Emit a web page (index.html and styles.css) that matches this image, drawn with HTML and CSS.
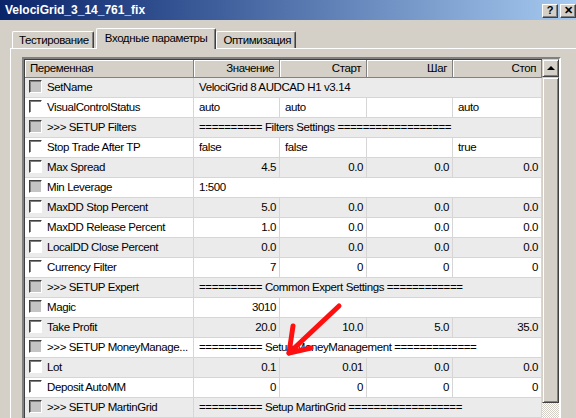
FILE: index.html
```html
<!DOCTYPE html>
<html lang="ru">
<head>
    <meta charset="UTF-8">
    <title>VelociGrid_3_14_761_fix</title>
    <link rel="stylesheet" href="styles.css">
</head>
<body>
<div class="window">
    <div class="titlebar">
        <span class="title">VelociGrid_3_14_761_fix</span>
        <div class="title-buttons">
            <span class="tbtn">?</span>
            <span class="tbtn">✕</span>
        </div>
    </div>

    <div class="tabs">
        <div class="tab tab-first">Тестирование</div>
        <div class="tab active">Входные параметры</div>
        <div class="tab">Оптимизация</div>
    </div>

    <div class="panel">
        <div class="grid-box">
            <table class="params">
                <colgroup>
                    <col class="c-name"><col class="c-val"><col class="c-start"><col class="c-step"><col class="c-stop">
                </colgroup>
                <thead>
                    <tr>
                        <th class="left">Переменная</th>
                        <th>Значение</th>
                        <th>Старт</th>
                        <th>Шаг</th>
                        <th>Стоп</th>
                    </tr>
                </thead>
                <tbody>
                    <tr class="odd">
                        <td><span class="cb off"></span>SetName</td>
                        <td colspan="4">VelociGrid 8 AUDCAD H1 v3.14</td>
                    </tr>
                    <tr>
                        <td><span class="cb"></span>VisualControlStatus</td>
                        <td>auto</td><td>auto</td><td></td><td>auto</td>
                    </tr>
                    <tr class="odd">
                        <td><span class="cb off"></span>&gt;&gt;&gt; SETUP Filters</td>
                        <td colspan="4">========== Filters Settings ==================</td>
                    </tr>
                    <tr>
                        <td><span class="cb"></span>Stop Trade After TP</td>
                        <td>false</td><td>false</td><td></td><td>true</td>
                    </tr>
                    <tr class="odd">
                        <td><span class="cb"></span>Max Spread</td>
                        <td class="num">4.5</td><td class="num">0.0</td><td class="num">0.0</td><td class="num">0.0</td>
                    </tr>
                    <tr>
                        <td><span class="cb off"></span>Min Leverage</td>
                        <td colspan="4">1:500</td>
                    </tr>
                    <tr class="odd">
                        <td><span class="cb"></span>MaxDD Stop Percent</td>
                        <td class="num">5.0</td><td class="num">0.0</td><td class="num">0.0</td><td class="num">0.0</td>
                    </tr>
                    <tr>
                        <td><span class="cb"></span>MaxDD Release Percent</td>
                        <td class="num">1.0</td><td class="num">0.0</td><td class="num">0.0</td><td class="num">0.0</td>
                    </tr>
                    <tr class="odd">
                        <td><span class="cb"></span>LocalDD Close Percent</td>
                        <td class="num">0.0</td><td class="num">0.0</td><td class="num">0.0</td><td class="num">0.0</td>
                    </tr>
                    <tr>
                        <td><span class="cb"></span>Currency Filter</td>
                        <td class="num">7</td><td class="num">0</td><td class="num">0</td><td class="num">0</td>
                    </tr>
                    <tr class="odd">
                        <td><span class="cb off"></span>&gt;&gt;&gt; SETUP Expert</td>
                        <td colspan="4">========== Common Expert Settings ============</td>
                    </tr>
                    <tr>
                        <td><span class="cb off"></span>Magic</td>
                        <td class="num">3010</td><td colspan="3"></td>
                    </tr>
                    <tr class="odd">
                        <td><span class="cb"></span>Take Profit</td>
                        <td class="num">20.0</td><td class="num">10.0</td><td class="num">5.0</td><td class="num">35.0</td>
                    </tr>
                    <tr>
                        <td><span class="cb off"></span>&gt;&gt;&gt; SETUP MoneyManage...</td>
                        <td colspan="4">========== Setup MoneyManagement =============</td>
                    </tr>
                    <tr class="odd">
                        <td><span class="cb"></span>Lot</td>
                        <td class="num">0.1</td><td class="num">0.01</td><td class="num">0.0</td><td class="num">0.0</td>
                    </tr>
                    <tr>
                        <td><span class="cb"></span>Deposit AutoMM</td>
                        <td class="num">0</td><td class="num">0</td><td class="num">0</td><td class="num">0</td>
                    </tr>
                    <tr class="odd">
                        <td><span class="cb off"></span>&gt;&gt;&gt; SETUP MartinGrid</td>
                        <td colspan="4">========== Setup MartinGrid ==================</td>
                    </tr>
                    <tr>
                        <td></td><td></td><td></td><td></td><td></td>
                    </tr>
                </tbody>
            </table>
            <div class="scrollbar">
                <div class="sb-btn"><span class="sb-up"></span></div>
                <div class="sb-thumb"></div>
            </div>
        </div>
    </div>

    <!-- red marker drawn over the table -->
    <svg class="arrow" width="576" height="418" viewBox="0 0 576 418">
        <g stroke="#ff1010" stroke-width="5" stroke-linecap="round" stroke-linejoin="round" fill="none">
            <path d="M339 306 L289 353"/>
            <path d="M293 326 L289 353 L311 348"/>
        </g>
    </svg>
</div>
</body>
</html>
```

FILE: styles.css
```css
/* Global */
body {
    margin: 0;
    padding: 0;
    background-color: #d4d0c8;
    font-family: 'Liberation Sans', Arial, sans-serif;
    font-size: 11.5px;
    letter-spacing: -0.4px;
    color: #000000;
}

.window {
    position: relative;
    width: 576px;
    height: 418px;
    overflow: hidden;
    background-color: #d4d0c8;
}

/* Title bar */
.titlebar {
    height: 20px;
    display: flex;
    align-items: center;
    justify-content: space-between;
    padding-left: 5px;
    background: linear-gradient(to right, #0a246a, #3a5a98 35%, #a6caf0);
}

.title {
    color: #ffffff;
    font-weight: 700;
    font-size: 12px;
    letter-spacing: 0;
}

.title-buttons {
    display: flex;
    gap: 2px;
    padding-top: 1px;
}

.tbtn {
    width: 14px;
    height: 12px;
    display: flex;
    justify-content: center;
    align-items: center;
    background: #d4d0c8;
    border: 1px solid;
    border-color: #ffffff #404040 #404040 #ffffff;
    box-shadow: inset -1px -1px #808080;
    font-size: 11px;
    font-weight: 700;
    letter-spacing: 0;
    line-height: 1;
}

/* Tabs */
.tabs {
    display: flex;
    align-items: flex-end;
    margin-top: 8px;
    padding-left: 12px;
    height: 20px;
}

.tab {
    height: 16px;
    line-height: 16px;
    padding: 0 4px 0 6px;
    border-top: 1px solid #ffffff;
    border-left: 1px solid #ffffff;
    border-right: 1px solid #404040;
    box-shadow: inset -1px 0 #808080;
    border-radius: 2px 2px 0 0;
}

.tab.active {
    position: relative;
    z-index: 1;
    height: 20px;
    line-height: 19px;
    margin-bottom: -1px;
    padding: 0 8px 0 8px;
    margin-left: 2px;
    background: #d4d0c8;
}

/* Panel */
.panel {
    margin-left: 10px;
    width: 557px;
    height: 400px;
    padding: 8px 0 0 11px;
    border-top: 1px solid #ffffff;
    border-left: 1px solid #ffffff;
    border-right: 1px solid #404040;
    box-shadow: inset -1px 0 #808080;
}

.grid-box {
    display: flex;
    width: 535px;
    height: 380px;
    border: 2px solid;
    border-color: #808080 #ffffff #ffffff #808080;
    box-shadow: inset 1px 1px #404040;
    overflow: hidden;
}

/* Parameter table */
.params {
    border-collapse: separate;
    border-spacing: 0;
    table-layout: fixed;
    width: 518px;
    background: #ffffff;
    align-self: flex-start;
    margin: 1px 0 0 1px;
}

.c-name { width: 169px; }
.c-val { width: 86px; }
.c-start { width: 87px; }
.c-step { width: 86px; }
.c-stop { width: 89px; }

.params th {
    height: 17px;
    line-height: 17px;
    padding: 0 5px;
    font-weight: 400;
    text-align: right;
    background: #d4d0c8;
    border-right: 1px solid #808080;
    border-bottom: 1px solid #808080;
    box-shadow: inset 1px 1px #ffffff;
}

.params th.left {
    text-align: left;
    padding-left: 5px;
}

.params td {
    height: 19px;
    line-height: 19px;
    padding: 0 5px;
    white-space: nowrap;
    overflow: hidden;
    border-right: 1px solid #d6d6d6;
    border-bottom: 1px solid #d6d6d6;
}

.params td:first-child {
    padding-left: 4px;
}

.params tr.odd td {
    background: #ebebeb;
}

.params td.num {
    text-align: right;
    padding-right: 3px;
}

/* Checkbox */
.cb {
    display: inline-block;
    width: 11px;
    height: 11px;
    vertical-align: -2px;
    margin-right: 5px;
    background: #ffffff;
    border: 1px solid;
    border-color: #404040 #ffffff #ffffff #404040;
    box-shadow: inset 1px 1px #808080;
}

.cb.off {
    background: #c4c4c4;
}

/* Scrollbar */
.scrollbar {
    width: 17px;
    display: flex;
    flex-direction: column;
    background-color: #ffffff;
    background-image: repeating-conic-gradient(#d4d0c8 0% 25%, #ffffff 0% 50%);
    background-size: 2px 2px;
}

.sb-btn,
.sb-thumb {
    box-sizing: border-box;
    background: #d4d0c8;
    border: 1px solid;
    border-color: #d4d0c8 #404040 #404040 #d4d0c8;
    box-shadow: inset 1px 1px #ffffff, inset -1px -1px #808080;
}

.sb-btn {
    height: 18px;
    display: flex;
    justify-content: center;
    align-items: center;
}

.sb-up {
    width: 0;
    height: 0;
    border-left: 4px solid transparent;
    border-right: 4px solid transparent;
    border-bottom: 4px solid #000000;
}

.sb-thumb {
    height: 326px;
}

/* Overlay marker */
.arrow {
    position: absolute;
    left: 0;
    top: 0;
    pointer-events: none;
}
```
